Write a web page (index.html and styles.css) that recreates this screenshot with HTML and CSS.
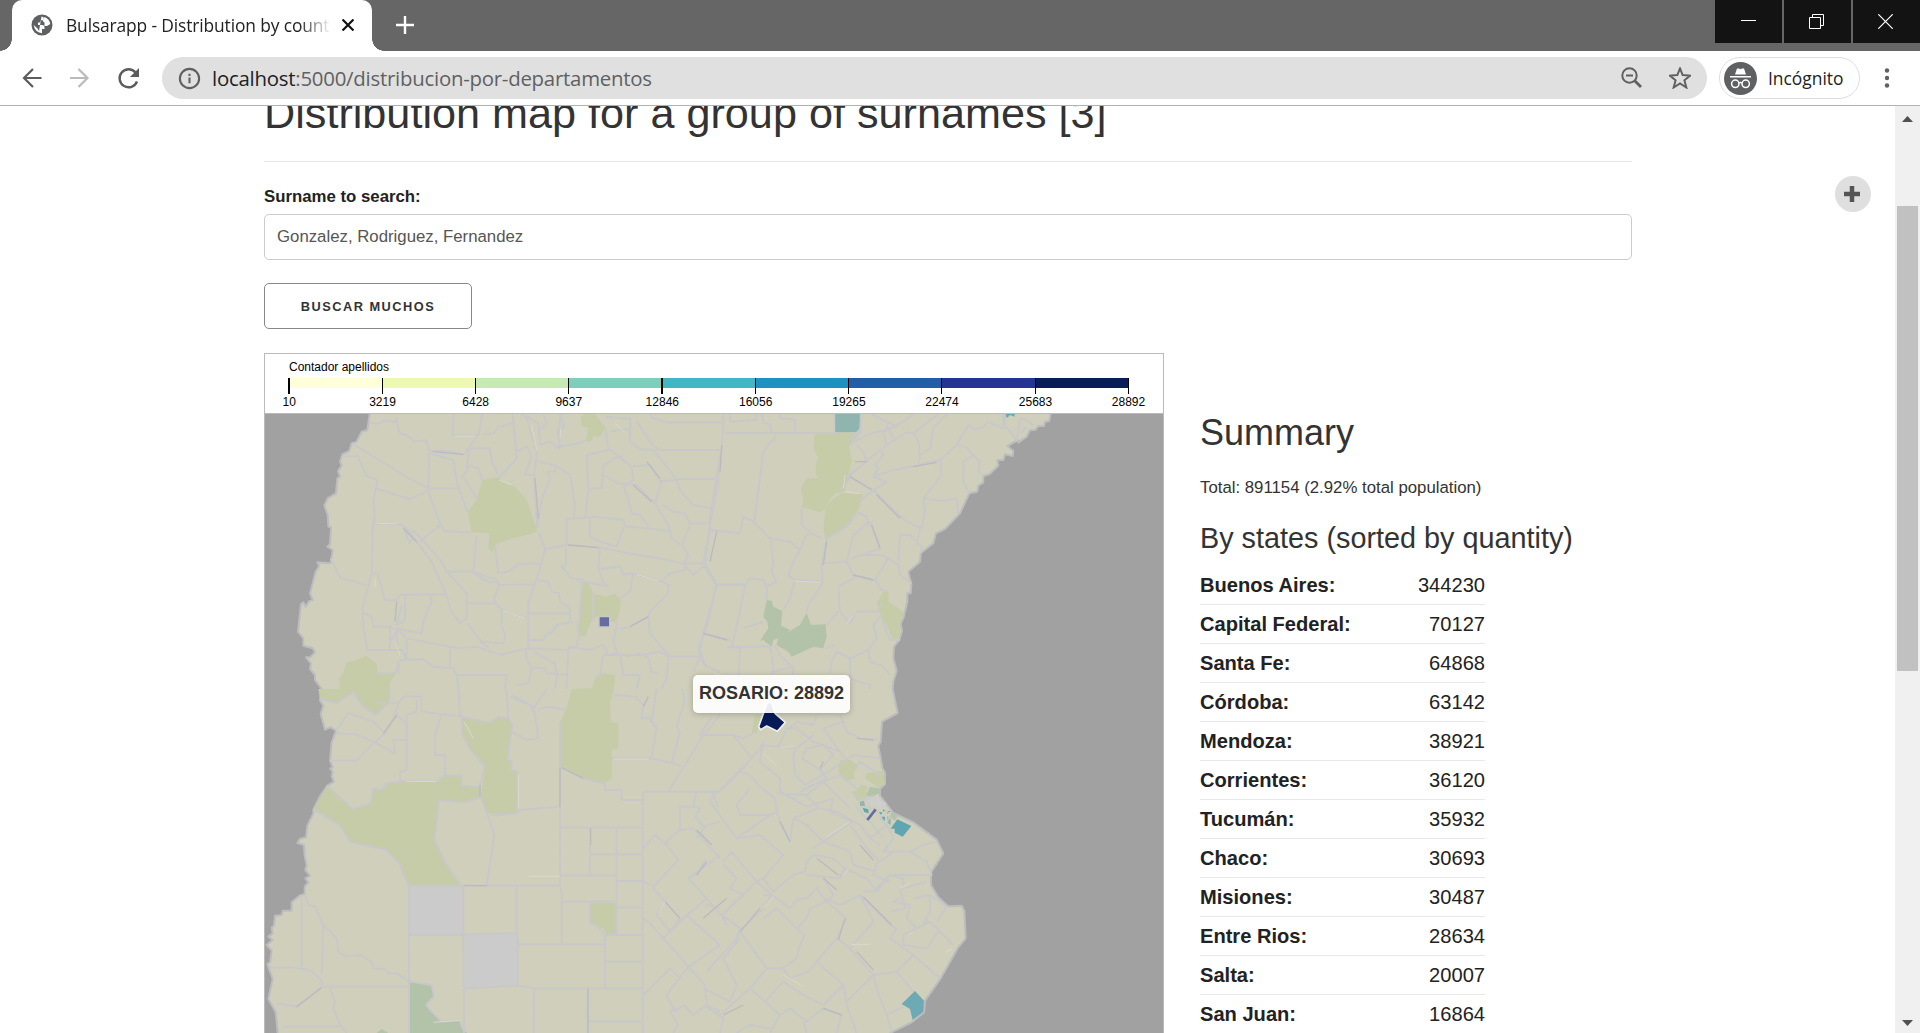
FILE: index.html
```html
<!DOCTYPE html>
<html lang="en">
<head>
<meta charset="utf-8">
<title>Bulsarapp - Distribution by county</title>
<link rel="stylesheet" href="styles.css">
</head>
<body>
<div class="window">
  <header class="tabstrip">
    <div class="tab">
      <svg width="22" height="22" viewBox="0 0 22 22"><circle cx="11" cy="11" r="10.500" fill="#5f6061"/><path d="M10.500 2.600C13 3 13.500 4.500 12 6L9.500 6.500 9 8.500H7V11H11Q13.500 11 13.500 13V15H11V19.200Q3.500 18 2.700 11L6.500 14.500 8 17" fill="#fff"/><path d="M13.500 2.900Q18.500 5 19.300 10L16 12H13.500V8.500L11.500 7Z" fill="#fff"/></svg>
      <span class="tab-title">Bulsarapp - Distribution by count</span>
      <svg class="tab-close" width="12" height="12" viewBox="0 0 12 12"><path d="M.5.5 11.500 11.500M11.500.5.5 11.500" stroke="#111" stroke-width="2.200"/></svg>
    </div>
    <svg class="new-tab" width="18" height="18" viewBox="0 0 18 18"><path d="M9 0V18M0 9H18" stroke="#fff" stroke-width="2.400"/></svg>
    <div class="controls">
      <span><svg width="15" height="15" viewBox="0 0 15 15"><path d="M0 6.500H15" stroke="#fff"/></svg></span>
      <span><svg width="15" height="15" viewBox="0 0 15 15" fill="none" stroke="#fff"><path d="M.5 3.500H11.500V14.500H.5ZM3.500 3.500V.5H14.500V11.500H11.500"/></svg></span>
      <span><svg width="15" height="15" viewBox="0 0 15 15"><path d="M.3.3 14.700 14.700M14.700.3.3 14.700" stroke="#fff" stroke-width="1.200"/></svg></span>
    </div>
  </header>
  <div class="toolbar">
    <svg class="nav" width="120" height="24" viewBox="0 0 120 24" fill="none" stroke-width="2.200"><path d="M19.500 12H2M11 3 2 12 11 21" stroke="#5b5c5e"/><path d="M48 12H65.500M56.500 3 65.500 12 56.500 21" stroke="#babbbc"/><path d="M113.500 6.500A9 9 0 1 0 115 15.500" stroke="#5b5c5e" stroke-width="2.400"/><path d="M117 2V11H108Z" fill="#5b5c5e"/></svg>
    <div class="omnibox">
      <svg width="23" height="23" viewBox="0 0 22 22"><circle cx="11" cy="11" r="9.200" fill="none" stroke="#5f6062" stroke-width="2"/><path d="M11 10V15.500M11 6.500V8.500" stroke="#5f6062" stroke-width="2"/></svg>
      <span class="url"><b>localhost</b>:5000/distribucion-por-departamentos</span>
      <svg class="zoom-icon" width="22" height="22" viewBox="0 0 22 22" fill="none" stroke="#5f6062" stroke-width="2"><circle cx="8.500" cy="8.500" r="7.200"/><path d="M5 8.500H12"/><path d="M13.500 13.500 20 20" stroke-width="2.800"/></svg>
      <svg width="22" height="22" viewBox="1.500 1.300 19 19"><path d="M11 2.500 13.300 8.300 19.800 8.700 14.800 12.800 16.500 19 11 15.500 5.500 19 7.200 12.800 2.200 8.700 8.700 8.300Z" fill="none" stroke="#5f6062" stroke-width="1.700"/></svg>
    </div>
    <div class="profile">
      <svg width="33" height="33" viewBox="0 0 33 33"><circle cx="16.500" cy="16.500" r="16.500" fill="#5f6062"/><path d="M11 12.500 13 6.500H15L16.500 7.300 18 6.500H20L22 12.500ZM6 14H27V15.500H6Z" fill="#fff"/><g fill="none" stroke="#fff" stroke-width="1.500"><circle cx="11.300" cy="21.800" r="3.700"/><circle cx="21.700" cy="21.800" r="3.700"/><path d="M15 21Q16.500 20 18 21"/></g></svg>
      <span>Incógnito</span>
    </div>
    <svg class="menu-dots" width="6" height="20" viewBox="0 0 6 20" fill="#5f6062"><circle cx="3" cy="2.500" r="2.200"/><circle cx="3" cy="10" r="2.200"/><circle cx="3" cy="17.500" r="2.200"/></svg>
  </div>
  <div class="viewport">
    <main class="page">
      <h1>Distribution map for a group of surnames [3]</h1>
      <hr>
      <label for="surname">Surname to search:</label>
      <input id="surname" type="text" value="Gonzalez, Rodriguez, Fernandez">
      <button type="button">BUSCAR MUCHOS</button>
      <div class="columns">
        <section class="chart">
          <svg class="legend" width="898" height="59" viewBox="265 354 898 59">
            <path d="M289 378h93.300v10H289z" fill="#ffffd9"/><path d="M382.300 378h93.300v10h-93.300z" fill="#edf8b1"/><path d="M475.500 378h93.300v10h-93.300z" fill="#c7e9b4"/><path d="M568.800 378h93.300v10h-93.300z" fill="#7fcdbb"/><path d="M662 378h93.400v10H662z" fill="#41b6c4"/><path d="M755.300 378h93.400v10h-93.400z" fill="#1d91c0"/><path d="M848.600 378h93.300v10h-93.300z" fill="#225ea8"/><path d="M941.800 378h93.400v10h-93.400z" fill="#253494"/><path d="M1035 378h93.500v10H1035z" fill="#081d58"/>
            <path d="M382.500 378v16M475.500 378v16M568.500 378v16M755.500 378v16M848.500 378v16M941.500 378v16M1035.500 378v16M1128.500 378v16" stroke="#000"/><path d="M289 378v16M662 378v16" stroke="#000" stroke-width="2"/>
            <text x="289" y="371" textLength="100">Contador apellidos</text>
            <g text-anchor="middle"><text x="289.300" y="406">10</text><text x="382.500" y="406">3219</text><text x="475.700" y="406">6428</text><text x="568.800" y="406">9637</text><text x="662.300" y="406">12846</text><text x="755.700" y="406">16056</text><text x="848.900" y="406">19265</text><text x="942" y="406">22474</text><text x="1035.500" y="406">25683</text><text x="1128.500" y="406">28892</text></g>
          </svg>
          <svg class="map" width="898" height="619" viewBox="15 207 2694 1857">
            <path class="land" d="M330 200 322 255 305 260 290 290 275 295 268 318 247 328 240 350 245 362 234 378 240 395 232 400 228 445 203 460 193 482 203 510 205 545 213 548 210 598 202 605 218 615 212 655 172 652 178 662 167 680 150 745 158 765 148 768 137 785 130 772 123 778 114 860 130 880 130 902 158 910 165 922 150 937 138 937 153 955 150 972 165 990 165 1005 185 1032 180 1067 190 1082 182 1107 195 1154 212 1147 228 1157 215 1192 210 1247 218 1267 210 1270 218 1280 215 1294 222 1310 202 1322 178 1357 160 1394 160 1405 142 1442 138 1477 120 1482 112 1494 132 1500 134 1532 140 1562 136 1575 150 1592 136 1600 145 1612 134 1625 134 1647 118 1652 95 1672 95 1697 68 1697 65 1710 45 1712 42 1742 35 1747 38 1765 25 1775 38 1785 20 1800 35 1817 30 1852 22 1857 38 1902 25 1962 47 2002 55 2080H1870L1895 2062 1955 2032 1992 2002 1995 1967 2042 1900 2095 1807 2117 1780 2113 1697 2105 1682 2065 1684 2035 1657 2013 1620 2013 1582 2050 1525 2030 1484 1960 1432 1900 1404 1860 1352 1860 1332 1875 1317 1875 1282 1868 1272 1855 1202 1862 1190 1866 1130 1913 1104 1898 1032 1900 1010 1910 978 1900 940 1902 905 1918 885 1926 858 1922 835 1930 820 1942 770 1942 745 1952 745 1954 718 1945 680 1980 650 1982 625 2020 595 2028 565 2055 552 2100 505 2128 445 2152 440 2155 422 2170 412 2170 393 2188 388 2215 362 2212 345 2230 345 2235 328 2258 333 2260 318 2242 303 2275 285 2275 293 2300 275 2310 255 2325 255 2335 243 2352 243 2355 230 2368 228 2372 200Z"/>
            <g class="low">
              <path d="M963 213 975 207H1005L1037 250 1017 275 1002 272 990 292 977 288 985 250 965 242ZM668 405 715 395 725 408 765 425 800 465 832 560 710 595 698 620 685 612 688 565 635 562 624 500 650 465ZM970 710 982 712 997 735V825L985 850 975 875 955 870 957 820ZM1002 745 1035 755 1065 748 1083 765 1078 800 1068 830 1052 830 1050 812H1015L1000 820ZM240 1032 238 1000 250 985 258 953 290 945 318 932 350 955 352 985 410 985 390 1010V1032L388 1070 345 1110 305 1080 280 1040 230 1075 180 1062 175 1032ZM1005 1003 1030 985 1065 990 1062 1032 1050 1075 1052 1130 1075 1135V1210L1055 1215V1300L1030 1315 970 1300 900 1265 900 1130 918 1095 935 1032 995 1030ZM605 1117 660 1125 690 1132 715 1115 745 1120 757 1137 742 1242 755 1250V1275L772 1280V1405L710 1415 680 1400 662 1355 675 1265 630 1212 607 1170ZM202 1322 278 1393 333 1375 340 1330 365 1335 380 1315 440 1307 535 1308 550 1292H605V1322L660 1326V1360L613 1373 537 1365 523 1485 560 1560 570 1580 603 1622H445L415 1550 378 1515 270 1490 240 1440 160 1394ZM990 1673H1067V1767H1040L1030 1750 1010 1745 990 1730Z"/>
              <path d="M1665 265H1795L1780 295 1767 300 1775 350 1765 390 1753 440 1725 445 1710 462 1695 492 1680 502 1640 490 1625 488 1630 460 1622 430 1640 400H1675L1667 385 1668 355 1675 340 1660 310ZM1745 445 1808 447 1800 485 1760 540 1697 585 1690 550 1697 485 1715 465ZM1870 740 1885 740 1885 770 1930 800 1920 840 1918 880 1895 880 1885 850 1865 820 1850 775ZM1740 1245 1770 1245 1795 1262 1783 1280V1302L1755 1307 1735 1280ZM1820 1285 1870 1277 1875 1317 1855 1328 1815 1300ZM1485 1110 1505 1107 1490 1165 1475 1165Z"/>
            </g>
            <path class="mid" d="M1520 765 1535 768 1540 785 1567 798 1563 842 1590 855 1570 875 1540 885 1535 905 1510 885 1500 888 1525 850 1522 830 1510 815ZM1640 803 1653 840 1697 838 1700 875 1690 910 1660 905 1595 935 1585 920 1550 900 1555 880 1620 840ZM450 1910 515 1920 522 1955 498 1980 515 2000 545 2030 598 2025 610 2055 630 2070H450ZM350 2064 365 2052 385 2064Z"/>
            <g class="empty"><path d="M447 1625H610V1770H447ZM612 1768H773V1925H612Z"/></g>
            <path fill="#90b5ae" d="M1725 207H1801L1798 262H1725Z"/>
            <path fill="#6eaab3" d="M2228 207H2264V215L2250 210 2242 218ZM1965 1938 1992 1967 1990 2000 1958 2025 1950 1992 1925 1977Z"/>
            <g class="borders">
              <path d="M330 232 355 237 375 225 405 232 410 218 418 265 440 270 465 290 500 285 508 325 505 430 510 455 540 535 552 558 630 563M275 295 450 402 508 430H598M247 335 293 333 320 392 352 405 348 430 450 463 508 435M352 405 340 470 345 510 338 540 335 685 325 725 307 790 312 860 322 915H425L440 940M212 640 240 697 322 722M580 207 578 272 655 270 667 207M667 268 700 265 715 248 740 240 765 232M510 318 560 318 612 328 650 275M512 325 580 345 590 405 598 435 622 500M620 380 625 320 630 310H690L695 350 715 390M605 400 630 362 655 370 668 405M612 400 655 465M758 207 770 340 715 400M785 207 800 220 830 325 822 400 832 550M768 320 800 305 815 335 795 390 820 390M800 215 835 235 840 298 870 290 898 310 900 207M850 207 860 235 835 260M832 350 888 362 885 380 862 380 870 400 845 465 832 545M888 362 930 390 945 480 940 520M900 207 912 247 892 255 900 305 945 297 975 288M1037 255 1045 315 980 330 985 435 975 518 920 522V600L855 612 838 565M990 430H1025L1030 362 1060 340 1090 335M1037 215 1080 220H1110L1112 250 1050 260M1110 255V290L1140 312 1180 315 1250 402H1370M1130 230 1170 290 1195 315H1380M1170 207 1175 217 1220 232H1380M1045 310 1115 365 1170 360 1200 408 1250 405 1260 435 1300 480 1355 490M1030 390 1075 415 1130 420 1185 475 1225 540 1235 580 1262 600M1115 365 1120 405 1090 425 1105 460 1115 505 1140 510 1165 545M1185 475 1205 410M1210 480 1240 500 1275 505 1290 535 1350 535M975 518 1000 515 1090 525 1095 545 1165 550 1235 560M990 520V575L1020 590 1070 605 1090 550M920 600 1020 608 1135 630 1170 635 1270 655 1285 630 1265 600 1290 540M1380 330 1368 405 1350 510 1350 555 1330 655 1275 655V675L1230 685 1205 710 1120 685 1110 740 1078 760M1350 558H1380M1330 660 1370 720 1335 865 1318 900V940L1300 980M1270 655 1300 690 1335 660M1020 608 1015 670 1030 712 1045 725 970 710M1018 672 1080 665 1090 688 1120 685M918 605V660L905 665 935 700 970 705M855 612 845 655 775 657 745 680 715 685 705 600M845 655 825 715 805 775V910M825 718 720 720 710 705 640 680 650 570M340 535 420 538 440 550 515 650 555 740 575 800 600 835 620 820V745L560 680 545 650 465 560 435 560 450 595 460 570M480 590 540 540M340 685 355 690 375 765 410 765M435 750 555 748M410 765 420 750H435M435 755V825L410 840 425 780M555 680H640L665 700 690 712 712 710 718 720 702 765 710 780 735 800 800 820M620 775H700M725 795V840L735 870 730 895 665 890 620 835M510 748 515 770 490 830 485 865 410 850M305 800 335 815 340 845 390 845 390 900 385 912M390 845 420 860 440 880 570 905V970M390 890 410 860 412 910M835 705 865 710 875 740 898 745 900 770 930 790V825M805 805H930M805 885 850 885 860 865 880 860 890 840 940 830M950 830 958 870 950 905 925 910 920 1032M958 830 965 710M1000 740V830M1068 825 1070 850 1060 885 1070 925 1045 930 1030 900 990 915 925 905M1078 852 1110 845 1165 815 1170 800 1225 745 1225 720 1200 705M1165 815 1170 865 1230 935H1318M1030 930H1145L1200 920 1225 935 1220 1000 1205 1032M570 905 600 910 650 905 720 930 760 920 800 910 920 915M660 890 690 910M440 885 440 940 415 950 415 985M440 945 490 942 520 965 580 970 590 990 740 990 735 1032M590 990 600 1060M798 915 800 940 815 970 805 1015 770 1020M820 920 865 945 885 955 890 990 885 1032M815 968 855 970 860 985 925 990M1030 930 1020 990 1005 1000M1080 925 1090 990 1140 990 1130 1032M1100 935 1140 925 1165 940 1175 980 1195 985M1318 940 1340 965 1380 980M1345 868 1380 880M350 985 405 985 418 955"/>
              <path d="M1380 232H1390L1390 207M1390 230 1385 315 1375 405 1360 490 1350 535 1335 655 1370 720 1455 720 1470 700 1510 705 1520 725 1550 710 1535 680 1540 650 1530 580 1480 530 1450 515 1440 565 1355 555M1390 264H1725M1490 207V225L1410 230V207M1505 207 1510 235 1530 237 1535 264M1560 207V220L1605 223V264M1545 270V280L1532 290 1510 320 1483 530M1723 207V264M1802 207V260L1770 300M1802 250 1770 285M1455 720 1440 800 1415 905 1530 905M1370 720 1330 865 1410 885M1455 718 1370 718M1330 865 1320 920 1340 970M1530 580 1590 590 1620 615 1640 570 1655 565M1625 490V540L1655 565 1685 580M1620 615 1600 650 1585 690 1605 705 1688 710 1685 660 1700 580 1760 545 1790 505M1605 705 1590 760 1570 795M1690 710 1645 780 1640 800M1520 720 1520 765M1685 655 1760 650 1780 690 1845 705 1885 640 1860 630 1800 630 1775 640M1760 650 1780 570 1830 530 1850 580 1860 610 1790 635M1790 500 1820 515 1825 540M1790 695 1735 725 1740 800 1770 835 1790 800 1815 800 1855 800 1865 775M1845 705 1865 735 1885 740M1885 640 1915 660 1920 690 1955 715M1915 650 1920 570 1950 570 1985 605 1980 625M1980 550 1970 600M1725 900 1695 910M1735 800 1700 840M1770 835 1780 805M1865 810 1840 840 1850 880 1825 915 1770 940 1730 920 1715 950 1710 985M1865 820 1890 885 1920 885M1740 440 1770 395 1840 435 1880 475 1940 530 1985 550 1995 500 1990 460 2045 390 2040 345 1980 360 1900 375 1840 395 1855 370 1845 360 1870 330 1860 315 1760 400M1760 395 1820 350 1810 320 1790 300M1770 298 1820 270 1890 250 1930 230 1960 207M1835 207 1870 225 1910 245 1870 260 1880 300 1940 262 1960 265 2035 207M1880 240 1900 280M1870 315 1875 300M1960 265 1975 290 1980 330 1975 360 2040 345 2090 300 2115 305 2140 330 2110 350 2110 410 2128 445M1980 330 2010 310 2020 250 2060 207M2090 300 2125 240 2145 255 2170 245 2185 230 2230 250V207M2140 330 2160 350 2155 380 2170 395M1990 460 2050 468 2090 460 2095 505M2235 207V240L2270 285 2280 225 2290 220 2320 240M2280 265 2300 245M1840 395 1880 410 1820 450 1800 470M1400 905 1440 910 1435 1032M1530 905 1540 960 1535 1032M1545 900 1560 930 1600 970 1595 1032M1540 980 1600 965M1770 940V1000L1830 1020V1032M1825 915 1830 950 1870 965 1890 990M1340 1000 1330 1032M1450 850 1510 830"/>
              <path d="M180 1062 230 1075 280 1040 305 1080 345 1110 388 1070 390 1032M228 1157 265 1105 340 1130 375 1165 410 1110 440 1135V1275L420 1280V1310M228 1165 290 1168 340 1190 405 1225 400 1185H440M210 1247 290 1247 340 1195 375 1165M345 1075 415 1075 430 1055 485 1055V1100L600 1115M400 1115 415 1080M440 1130V1110L470 1100V1065M545 1105 525 1170V1230H555V1290M202 1322 278 1393 333 1375 340 1330 365 1335 380 1315 440 1307 535 1308 550 1292H605V1322L660 1326M605 1105 607 1170 630 1212 675 1265 660 1320V1355L613 1373 537 1365 523 1485 560 1560 603 1622M740 1032 745 1120 757 1137 742 1242 755 1250V1275L772 1280V1405M595 1032 600 1117M605 1117 630 1120 660 1130 690 1132 715 1115 745 1120M662 1355 680 1400 703 1470 680 1620M690 1410 770 1405 780 1395 900 1385M900 1130V1625M900 1265 970 1300 1035 1317V1335H1085V1365H1148V2064M757 1160 800 1185 835 1180 825 1110 810 1080 770 1065 750 1055M835 1095 860 1085 918 1095M820 1090 860 1032M757 1050 800 1075 830 1090M160 1394 240 1440 270 1490 378 1515 415 1550 445 1622H900L905 1640V1800M900 1592H1068M900 1448H1148M990 1448V1592M1070 1448V1770M990 1528H1148M1068 1608H1148M905 1670H1068M1068 1688H1148M990 1670V1735L1010 1740 1035 1770H1148M770 1622V1765M610 1622V1925M447 1622V2064M447 1770H610M610 1768 773 1765V1925M773 1798H1035V1930M1035 1850H1148M1035 1770V1800M125 1650V1870M135 1650 145 1680 165 1685 190 1740 230 1780 235 1820 260 1835 300 1830 335 1850 340 1870 375 1872 385 1885 410 1885 445 1908M190 1740 185 1885M30 1868 100 1868 150 1875 185 1905 185 1925H447M185 1925 110 1985 50 1975M210 1930 225 1970 220 1990 240 2040 260 2064M70 2045H150L240 2045M612 1930 773 1922 822 1930H1148M612 1930V2064M822 1930V2064M983 1930V2064M983 2030H1148M450 1910 515 1920 522 1955 498 1980 515 2000 545 2030 598 2025 610 2055M1055 1240H1175L1265 1262M1062 1050 1125 1055 1150 1080 1145 1120 1170 1120 1180 1140 1190 1145 1175 1240M1190 1032 1175 1130M1265 1032 1275 1065 1250 1145 1260 1160 1235 1255M1380 1110 1330 1170 1225 1340H1150V1365M1148 1340H1380M1330 1170H1380M1310 1340 1300 1385 1260 1385V1455L1220 1490 1220 1500 1255 1545 1180 1625 1150 1610M1150 1510 1185 1470 1220 1500M1300 1385 1320 1390 1305 1415 1330 1445 1380 1430M1260 1455 1300 1450 1380 1540M1310 1480 1340 1440M1380 1530 1300 1590 1285 1600 1340 1660 1280 1710 1210 1780 1165 1730 1150 1720M1335 1545 1310 1590M1180 1630 1260 1720 1230 1760 1190 1710 1215 1670M1280 1710 1380 1800 1285 1865 1210 1780M1340 1680 1380 1690M1285 1865 1335 1920 1340 1980 1300 2010 1270 1980 1245 2000 1220 1950 1285 1865M1150 1950 1230 1870 1260 1900M1250 1990 1230 2000 1255 2040 1240 2064M1340 1980 1380 2000M1355 1340 1375 1385"/>
              <path d="M1355 1115 1320 1170H1420L1475 1240 1375 1340H1310M1420 1170 1450 1180 1480 1165M1500 1200 1555 1205 1610 1210 1600 1230 1605 1290 1635 1320 1720 1270 1780 1230 1860 1240M1505 1205 1440 1280 1400 1320 1375 1340M1510 1190 1500 1250 1560 1300V1340L1640 1385 1720 1360M1555 1205 1580 1150 1610 1150 1660 1190 1740 1220 1755 1240M1590 1150 1610 1130 1660 1140 1670 1110M1610 1210 1660 1170M1625 1240 1680 1275 1720 1230 1690 1200 1640 1210 1625 1240M1680 1275 1700 1300 1620 1340M1740 1220 1690 1150 1750 1130 1740 1110M1740 1110 1760 1160 1800 1180 1855 1185M1785 1270 1800 1250 1860 1290M1440 1280 1470 1290 1500 1325 1545 1360 1550 1400 1530 1410 1430 1480 1350 1370 1370 1340M1470 1330 1430 1380 1440 1410 1530 1410M1550 1345 1640 1350 1675 1390 1600 1420 1590 1490 1560 1430 1550 1400M1640 1350 1690 1310 1740 1290 1790 1330M1690 1310 1740 1360 1770 1390M1675 1390 1730 1400 1800 1440 1830 1480 1860 1500M1720 1360 1710 1400 1775 1430 1690 1490 1660 1510M1600 1420 1640 1440 1690 1490 1770 1520 1780 1560 1850 1580M1430 1480 1500 1470 1570 1530 1510 1600 1490 1610 1415 1520 1390 1550M1770 1440 1830 1520 1855 1545 1840 1590 1890 1610M1830 1480 1880 1440 1900 1480 1870 1520 1950 1520 1990 1500 2030 1490M1900 1520 1860 1550M1950 1520 2000 1550 2015 1590 1960 1590 1890 1590 1850 1640 1820 1600 1755 1570 1740 1600M1640 1550 1635 1580 1600 1590 1540 1640 1510 1600M1640 1550 1660 1530 1720 1540 1755 1570 1735 1600 1640 1590M1690 1600 1720 1650 1700 1670 1670 1630 1640 1660 1610 1665 1590 1690 1535 1650 1510 1650M1390 1560 1430 1600 1410 1630 1450 1650 1385 1710 1490 1610M1330 1650 1385 1710 1440 1750 1430 1780 1340 1880M1385 1710 1400 1740M1490 1610 1535 1650 1510 1690 1440 1760 1520 1870 1570 1870 1610 1840 1620 1800 1635 1770 1610 1750 1550 1690 1510 1720M1610 1750 1640 1720 1650 1690 1700 1670 1760 1720 1730 1780 1770 1810 1840 1730 1800 1650 1740 1680 1700 1660M1800 1650 1860 1710 1890 1740 1910 1750 1890 1780 1960 1830 2040 1900M1810 1640 1840 1640 1890 1590 1930 1600 1930 1630 2000 1610M1920 1660 1900 1670 1950 1680 1940 1720 1970 1750 2010 1730 2030 1750 2080 1800M1920 1630 1935 1690 1890 1700M1960 1660 2010 1650 2060 1685 2030 1730M2010 1650 2010 1700 1990 1740M1970 1750 1930 1770 1930 1800 2000 1810 2035 1760M1960 1830 1910 1880 1960 1940M1770 1810 1840 1890 1910 1880M1670 1850 1730 1780M1570 1870 1590 1900 1645 1880 1670 1850 1750 1920 1690 1980 1630 1950 1570 1910 1515 1970 1470 1930 1380 2010M1520 1870 1470 1930M1440 1780 1390 1840 1430 1920 1410 1970 1330 1930M1750 1920 1760 1980 1790 2064M1760 1970 1840 1890 1850 1930 1880 2010 1930 1985M1515 1970 1560 2010 1590 1990 1640 2030 1690 1990 1745 2010 1730 2064M1630 2030 1640 2064M1560 2010 1530 2064M1880 2010 1895 2062M1340 1985 1390 2020 1380 2064M1430 2064 1470 2040 1530 2050"/>
            </g>
            <path class="shade" d="M1440 1760 1500 1690M1680 1270 1690 1250M1260 1720 1215 1670M1355 1500 1310 1455M1340 1550 1310 1590M1590 1490 1560 1430M1840 1545 1800 1500M1735 1785 1755 1720M1840 1875 1790 1820M1895 1740 1810 1655M1670 1540 1735 1590M1730 1635 1690 1600M1400 1660 1330 1720M1450 1980 1390 2010M1745 2010 1690 1990M110 1985 185 1928M900 1385V1270M984 1930V2064M992 1450V1500M612 1622H680M1385 300 1380 380M1370 560 1350 650M370 1165 410 1110M520 320 610 328M825 400 835 520M1175 470 1120 420M925 600 1015 608M1200 400 1160 350M1770 395 1835 435M1850 450 1920 520M1960 365 2030 352M1780 690 1840 705M1330 865 1400 885M1860 610 1835 540M1785 350 1820 350M1690 660 1700 590M970 1300 905 1268M1840 1185 1790 1180M430 550 470 590M1110 845 1165 815M405 830 410 770M1165 1055 1150 1085M660 1320V1355"/>
            <path class="sliver" d="M585 274 645 273M815 240 830 315M718 405 755 420M350 535 410 536M728 797 795 820M1130 688 1195 708M440 1309H530M1775 1798H1830M776 1290V1390M805 1594H900M1062 1242H1165M1215 1670 1195 1705M1755 440 1800 446M1755 390 1750 430M1600 708 1680 712M1510 1225 1550 1262M1600 1205 1560 1207M1700 1475 1770 1430M1510 1690 1540 1655M1570 1890 1630 1925M2055 1822 2075 1812M1750 1590 1765 1573M1920 1630 1950 1615M1760 835 1785 805M1945 1770 1960 1760M1360 985 1400 995M1065 235 1095 262M640 1180 612 1130M345 725 345 700M900 280 902 250M520 2032 600 2026M420 930 405 890"/>
            <g transform="translate(1710 1245)">
              <path d="M95 75 115 80 108 95 122 105 100 118 80 122 70 97Z" fill="#c6cca8"/>
              <path d="M120 80 145 85 150 98 125 112 110 104ZM185 155 205 165 195 182 180 172Z" fill="#b2c3aa"/>
              <path d="M90 125 102 122 105 138 90 138ZM172 168 182 178 182 195 172 188Z" fill="#90b5ae"/>
              <path d="M202 178 244 198 218 230 194 218 194 206H182ZM98 143 115 148 116 160 103 156ZM147 155 158 158 152 164ZM160 147 166 154 158 154ZM170 152 182 154 172 162ZM155 170 165 170 164 182 155 176Z" fill="#5fa6b2"/>
              <path d="M65 95 90 120 80 145 120 185M90 120 130 105M100 115 150 140M115 110 120 150M80 145 110 140 140 150 165 190M150 110 135 145M120 185 160 235M145 170 185 215M165 145 180 165 170 190" stroke="#c8c8cb" stroke-width="4"/>
              <path d="M128 118 145 106 152 122 168 128 166 140 150 145 132 135 115 128 108 120Z" fill="#cdcecd"/>
              <path d="M112 180 137 148" stroke="#676c9f" stroke-width="8"/>
            </g>
            <path d="M1017 815H1049V846H1017Z" fill="#676c9f" stroke="#c8c8cb" stroke-width="4"/>
            <path d="M1522 1073H1535L1545 1105 1576 1132 1552 1159 1520 1143 1502 1154 1496 1145 1510 1106Z" fill="#061a57" stroke="#eeeef3" stroke-width="5"/>
          </svg>
          <div class="tooltip">ROSARIO: 28892</div>
        </section>
        <aside class="summary">
          <h2>Summary</h2>
          <p>Total: 891154 (2.92% total population)</p>
          <h3>By states (sorted by quantity)</h3>
          <dl>
            <div><dt>Buenos Aires:</dt><dd>344230</dd></div>
            <div><dt>Capital Federal:</dt><dd>70127</dd></div>
            <div><dt>Santa Fe:</dt><dd>64868</dd></div>
            <div><dt>Córdoba:</dt><dd>63142</dd></div>
            <div><dt>Mendoza:</dt><dd>38921</dd></div>
            <div><dt>Corrientes:</dt><dd>36120</dd></div>
            <div><dt>Tucumán:</dt><dd>35932</dd></div>
            <div><dt>Chaco:</dt><dd>30693</dd></div>
            <div><dt>Misiones:</dt><dd>30487</dd></div>
            <div><dt>Entre Rios:</dt><dd>28634</dd></div>
            <div><dt>Salta:</dt><dd>20007</dd></div>
            <div><dt>San Juan:</dt><dd>16864</dd></div>
          </dl>
        </aside>
      </div>
    </main>
    <button class="fab" type="button" aria-label="Add"><svg width="16" height="16" viewBox="0 0 16 16"><path d="M8 0V16M0 8H16" stroke="#555" stroke-width="4.500"/></svg></button>
    <div class="scrollbar">
      <svg width="11" height="6" viewBox="0 0 11 6"><path d="M0 6 5.500 0 11 6Z" fill="#505050"/></svg>
      <div class="thumb"></div>
      <svg width="11" height="6" viewBox="0 0 11 6"><path d="M0 0 5.500 6 11 0Z" fill="#505050"/></svg>
    </div>
  </div>
</div>
</body>
</html>
```
FILE: styles.css
```css
* { box-sizing: border-box; }
body { margin: 0; background: #fff; font-family: "Liberation Sans", Arial, sans-serif; color: #333; }
svg { display: block; flex: none; }
.window { display: flex; flex-direction: column; width: 1920px; height: 1033px; overflow: hidden; }

.tabstrip { display: flex; height: 51px; background: #666; font-family: "Open Sans", "Noto Sans", sans-serif; }
.tab { position: relative; display: flex; align-items: center; width: 360px; height: 51px; margin-left: 12px; padding: 0 0 1px 19px; background: #fff; border-radius: 10px 10px 0 0; }
.tab::before, .tab::after { content: ""; position: absolute; bottom: 0; width: 12px; height: 12px; }
.tab::before { left: -12px; background: radial-gradient(circle at 0 0, transparent 11.5px, #fff 12px); }
.tab::after { right: -12px; background: radial-gradient(circle at 100% 0, transparent 11.5px, #fff 12px); }
.tab-title { width: 265px; margin-left: 13px; overflow: hidden; white-space: nowrap; font-size: 17.4px; letter-spacing: -.13px; color: #222; -webkit-mask-image: linear-gradient(90deg, #000 88%, transparent); mask-image: linear-gradient(90deg, #000 88%, transparent); }
.tab-close { margin-left: 11px; }
.new-tab { margin: 16px 0 0 24px; }
.controls { display: flex; gap: 2px; margin-left: auto; }
.controls span { display: flex; align-items: center; justify-content: center; width: 67px; height: 43px; background: #131313; }
.controls span + span svg { margin-right: 2px; }

.toolbar { display: flex; align-items: center; height: 55px; border-bottom: 1px solid #b2b2b2; font-family: "Open Sans", "Noto Sans", sans-serif; }
.nav { margin-left: 22px; }
.omnibox { display: flex; align-items: center; width: 1545px; height: 42px; margin-left: 20px; padding: 0 16px 0 16px; border-radius: 21px; background: #e0e0e0; }
.url { margin-left: 11px; font-size: 20.4px; letter-spacing: -.24px; color: #5f6062; }
.url b { font-weight: 400; color: #202124; }
.zoom-icon { margin: 0 26px 0 auto; }
.profile { display: flex; align-items: center; width: 141px; height: 42px; margin-left: 12px; padding-left: 4px; border: 1px solid #dedede; border-radius: 21px; font-size: 17.4px; color: #222; }
.profile span { margin-left: 11px; padding-bottom: 1px; }
.menu-dots { margin-left: 24px; }

.viewport { position: relative; display: flex; justify-content: space-between; height: 927px; overflow: hidden; }
.page { width: 1368px; margin-left: 264px; }
h1, h2, h3 { margin: 0; font-weight: 400; }
h1 { margin-top: -18px; height: 72px; font-size: 43.2px; line-height: 50px; white-space: nowrap; }
hr { height: 1px; margin: 0; border: 0; background: #e6e6e6; }
label { display: block; height: 53px; padding-top: 26px; font-size: 16.8px; line-height: 20px; font-weight: 700; color: #222; }
input { display: block; width: 1368px; height: 46px; padding: 0 12px; border: 1px solid #ccc; border-radius: 5px; font: 16.8px "Liberation Sans", Arial, sans-serif; color: #555; }
.page > button { display: block; width: 208px; height: 46px; margin-top: 23px; padding: 1px 0 0; border: 1px solid #888; border-radius: 5px; background: #fff; font: 700 12.8px "Liberation Sans", Arial, sans-serif; letter-spacing: 1.5px; color: #333; }
hr { position: relative; top: 1px; }
.columns { display: flex; margin-top: 24px; }
.chart { position: relative; width: 900px; height: 700px; border: 1px solid #bbb; }
.legend { border-bottom: 1px solid #bbb; height: 60px; font-size: 12px; fill: #000; }
.map { background: #a1a1a1; fill: none; stroke-linejoin: round; }
.land { fill: #cfcfbb; stroke: #bdbdc0; stroke-width: 6; }
.low { fill: #c6cca8; }
.mid { fill: #b2c3aa; }
.empty { fill: #cbcbcb; }
.borders { stroke: #c8c8cb; stroke-width: 5.5; }
.shade { stroke: #bababf; stroke-width: 4; }
.sliver { stroke: #dbdaca; stroke-width: 3; }
.tooltip { position: absolute; left: 428px; top: 321px; width: 157px; height: 38px; border-radius: 5px; background: rgba(255, 255, 255, .92); box-shadow: 0 1px 6px rgba(0, 0, 0, .22); text-align: center; font-size: 18px; line-height: 37px; font-weight: 700; white-space: nowrap; color: #333; }

.summary { margin-left: 36px; }
h2 { margin-top: 58px; font-size: 36px; line-height: 44px; }
.summary p { margin: 21px 0 0; font-size: 16.8px; line-height: 24px; white-space: nowrap; }
h3 { margin-top: 21px; font-size: 28.8px; line-height: 34px; white-space: nowrap; }
dl { width: 285px; margin: 10.600px 0 0; font-size: 20.1px; color: #222; }
dl div { display: flex; justify-content: space-between; height: 39px; padding-top: 7px; border-bottom: 1px solid #e8e8e8; line-height: 24px; }
dt { font-weight: 700; }
dd { margin: 0; }

.fab { position: absolute; left: 1835px; top: 70px; display: flex; align-items: center; justify-content: center; width: 36px; height: 36px; padding: 0 2px 0 0; border: 0; border-radius: 50%; background: #dfdfdf; }
.scrollbar { display: flex; flex-direction: column; align-items: center; width: 25px; height: 927px; padding: 10px 0 7px; background: #f0f0f0; }
.thumb { width: 21px; height: 465px; margin: 84px 0 auto; background: #c1c1c1; }
```
